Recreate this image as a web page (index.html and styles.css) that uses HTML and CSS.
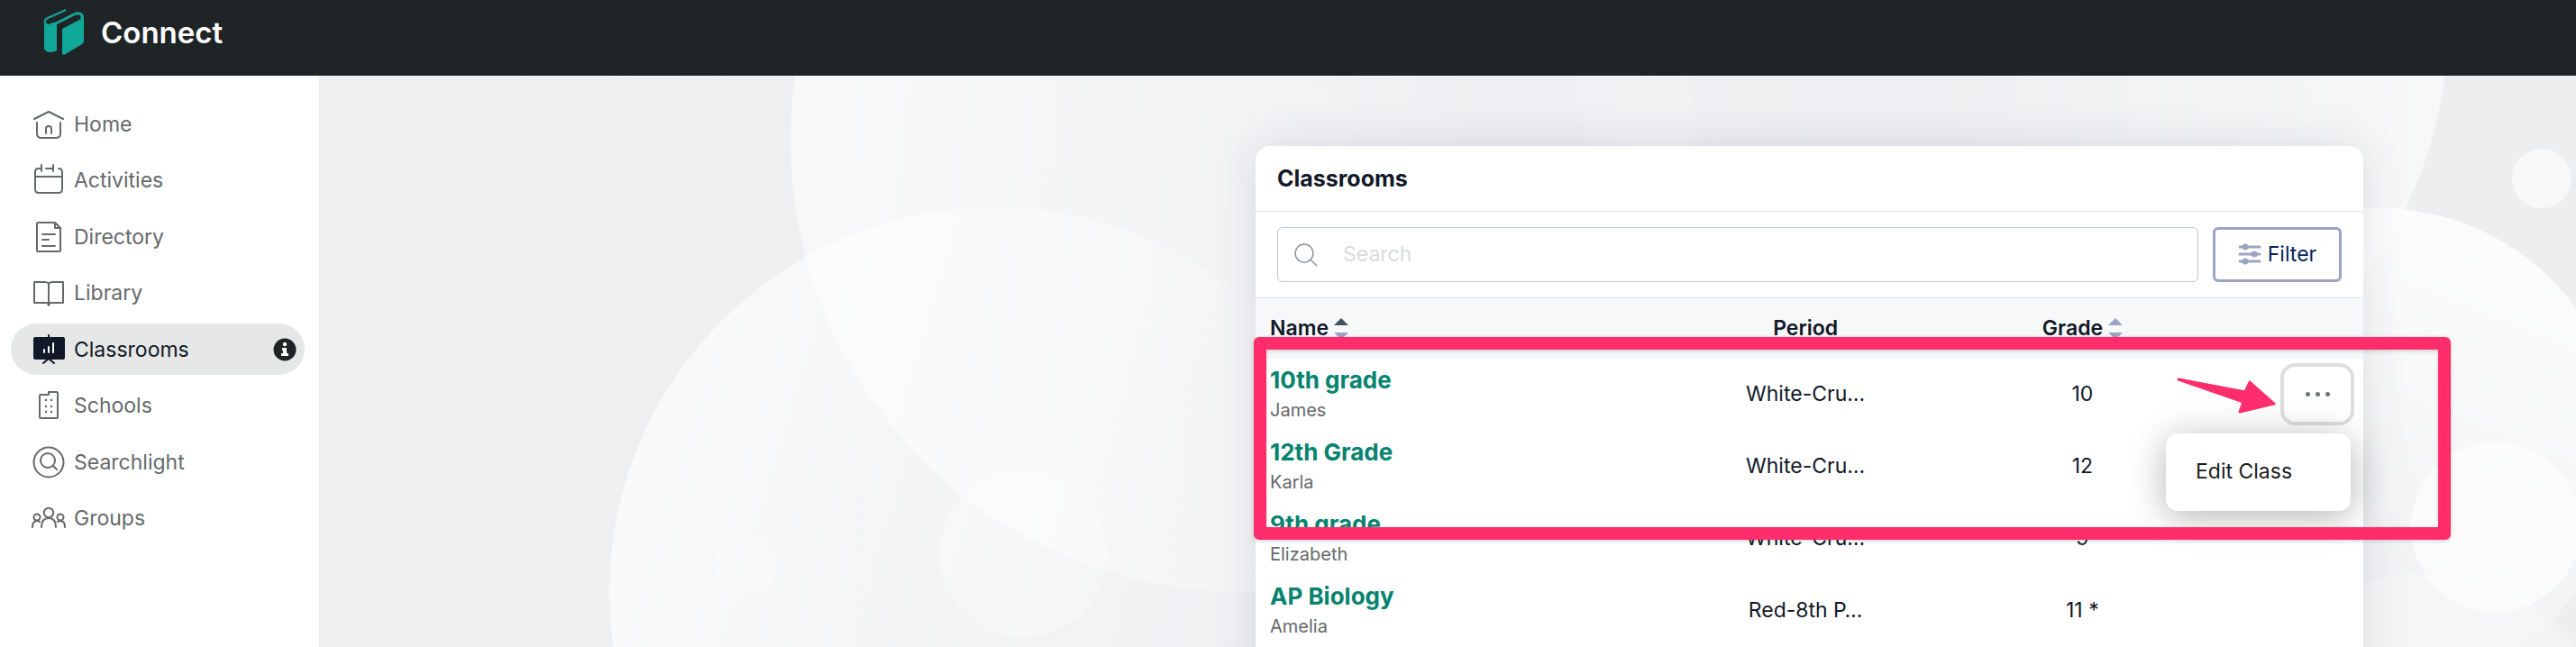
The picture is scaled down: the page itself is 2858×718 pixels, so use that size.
FILE: index.html
```
<!DOCTYPE html>
<html lang="en">
<head>
  <meta charset="UTF-8" />
  <meta name="viewport" content="width=device-width, initial-scale=1.0" />
  <title>Connect - Classrooms</title>
  <link rel="stylesheet" href="styles.css">
</head>
<body>
  <header class="topbar">
    <svg class="logo" viewBox="0 0 46 52" fill="#10a898">
      <path d="M1 13 Q3 17 8 17 Q12 17 15 15 V46 Q11 48 8 48 Q3 48 1 44 Z" />
      <path d="M2 15 Q1 12 5 10 L25 1" fill="none" stroke="#10a898" stroke-width="2" />
      <path d="M21 22 L42 11 L45 8 V36 Q45 38 43 39 L23 51 Q21 51 21 49 Z" />
      <path d="M8 17 Q12 17 16 15 L34 6 Q40 3 43 7 Q44 9 42 11" fill="none" stroke="#10a898" stroke-width="3" />
    </svg>
    <span class="brand">Connect</span>
  </header>

  <div class="page">
    <nav class="sidebar">
      <ul class="nav-list">
        <li><a class="nav-item" href="#">
          <svg class="nav-icon" viewBox="0 0 38 36"><path d="M3 12 L19 4 L35 12 M6 16 V28 Q6 33 11 33 H27 Q32 33 32 28 V16 M16 28 V23 Q16 20 19 20 Q22 20 22 23 V28" /></svg>
          Home</a></li>
        <li><a class="nav-item" href="#">
          <svg class="nav-icon" viewBox="0 0 38 36"><path d="M8 5 Q4 5 4 9 V28 Q4 32 8 32 H30 Q34 32 34 28 V9 Q34 5 30 5 M4 14 H34 M11 1 V8 M16 5 H24 M24 1 V8 M8 5 H11" /></svg>
          Activities</a></li>
        <li><a class="nav-item" href="#">
          <svg class="nav-icon" viewBox="0 0 38 36"><path d="M6 3 Q6 2 7 2 H26 L32 8 V33 Q32 34 31 34 H7 Q6 34 6 33 Z M26 2 V8 H32 M12 15 H26 M12 21 H19 M12 28 H26" /></svg>
          Directory</a></li>
        <li><a class="nav-item" href="#">
          <svg class="nav-icon" viewBox="0 0 38 36"><path d="M19 8 Q18 6 15 6 H3 V29 H16 Q19 29 19 32 Q19 29 22 29 H35 V6 H23 Q20 6 19 8 V31" /></svg>
          Library</a></li>
        <li><a class="nav-item active" href="#">
          <svg class="nav-icon solid" viewBox="0 0 38 36"><rect x="3" y="5" width="33" height="23" rx="1" /><path d="M19 2 V5 M19 28 L13 33 M19 28 L25 33" /><path class="bars" d="M14 18 V21 M19 15 V21 M24 11 V21" /></svg>
          Classrooms
          <svg class="info" viewBox="0 0 26 26"><circle cx="13" cy="13" r="12.5" /><circle cx="13" cy="7" r="2.2" fill="#fff" /><path d="M10 11 H15 V17 H17 V20 H9 V17 H11 V14 H10 Z" fill="#fff" /></svg></a></li>
        <li><a class="nav-item" href="#">
          <svg class="nav-icon" viewBox="0 0 38 36"><path d="M9 7 Q9 6 10 6 H19 V3 H28 Q29 3 29 4 V31 Q29 32 28 32 H10 Q9 32 9 31 Z" /><path class="dots" d="M16 12 h.01 M22 12 h.01 M16 19 h.01 M22 19 h.01 M16 25 h.01 M22 25 h.01" /></svg>
          Schools</a></li>
        <li><a class="nav-item" href="#">
          <svg class="nav-icon" viewBox="0 0 38 36"><circle cx="19" cy="18" r="16.5" /><circle cx="18" cy="16" r="8" /><path d="M24 22 L28 26" /></svg>
          Searchlight</a></li>
        <li><a class="nav-item" href="#">
          <svg class="nav-icon" viewBox="0 0 38 36"><circle cx="19" cy="12" r="5.2" /><circle cx="6" cy="17" r="3.5" /><circle cx="32" cy="17" r="3.5" /><path d="M11 28 Q11 18 19 18 Q27 18 27 28 M1 28 Q1 21 6 21 Q8 21 9 22 M37 28 Q37 21 32 21 Q30 21 29 22" /></svg>
          Groups</a></li>
      </ul>
    </nav>

    <main class="content">
      <svg class="backdrop" viewBox="354 84 2504 634" preserveAspectRatio="xMinYMin slice">
        <defs>
          <linearGradient id="fade" x1="0" y1="0.4" x2="1" y2="0.5">
            <stop offset="0" stop-color="#fff" stop-opacity="0.6" />
            <stop offset="0.4" stop-color="#fff" stop-opacity="0.4" />
            <stop offset="0.8" stop-color="#fff" stop-opacity="0.05" />
            <stop offset="1" stop-color="#fff" stop-opacity="0.12" />
          </linearGradient>
          <linearGradient id="fadeLow" x1="0" y1="0" x2="1" y2="0.3">
            <stop offset="0" stop-color="#fff" stop-opacity="0.75" />
            <stop offset="0.6" stop-color="#fff" stop-opacity="0.3" />
            <stop offset="1" stop-color="#fff" stop-opacity="0.1" />
          </linearGradient>
          <linearGradient id="fadeLeft" x1="1" y1="0" x2="0" y2="0">
            <stop offset="0" stop-color="#fff" stop-opacity="0.6" />
            <stop offset="0.6" stop-color="#fff" stop-opacity="0.05" />
            <stop offset="1" stop-color="#fff" stop-opacity="0.15" />
          </linearGradient>
          <linearGradient id="fadeDown" x1="0.7" y1="0" x2="0.3" y2="1">
            <stop offset="0.1" stop-color="#fff" stop-opacity="0.8" />
            <stop offset="0.7" stop-color="#fff" stop-opacity="0.3" />
          </linearGradient>
        </defs>
        <circle cx="1378" cy="156" r="501" fill="url(#fade)" />
        <circle cx="1104" cy="658" r="428" fill="url(#fadeLow)" />
        <circle cx="1135" cy="615" r="93" fill="#fff" fill-opacity="0.3" />
        <circle cx="828" cy="627" r="34" fill="#fff" fill-opacity="0.15" />
        <circle cx="2229" cy="20" r="488" fill="url(#fadeLeft)" />
        <circle cx="2640" cy="500" r="269" fill="url(#fadeDown)" />
        <circle cx="2693" cy="846" r="210" fill="#fff" fill-opacity="0.3" />
        <circle cx="2769" cy="585" r="94" fill="#fff" fill-opacity="0.6" />
        <circle cx="2820" cy="198" r="33" fill="#fff" fill-opacity="0.6" />
      </svg>

      <section class="card">
        <h1 class="card-title">Classrooms</h1>

        <div class="toolbar">
          <label class="search">
            <svg class="search-icon" viewBox="0 0 26 26"><circle cx="11" cy="11" r="10" /><path d="M18 18 L25 25" /></svg>
            <input class="search-input" type="text" placeholder="Search" aria-label="Search">
          </label>
          <button class="filter-button" type="button">
            <svg class="filter-icon" viewBox="0 0 26 24"><path d="M2 4 H24 M2 12 H24 M2 20 H24" /><circle cx="8" cy="4" r="3.5" /><circle cx="18" cy="12" r="3.5" /><circle cx="8" cy="20" r="3.5" /></svg>
            Filter
          </button>
        </div>

        <table class="class-table">
          <thead>
            <tr>
              <th class="col-name">Name <svg class="sort" viewBox="0 0 16 24"><path class="sorted" d="M0 8 L8 0 L16 8 Z" /><path d="M0 16 H16 L8 24 Z" /></svg></th>
              <th class="col-period">Period</th>
              <th class="col-grade">Grade <svg class="sort" viewBox="0 0 16 24"><path d="M0 8 L8 0 L16 8 Z" /><path d="M0 16 H16 L8 24 Z" /></svg></th>
              <th class="col-actions"></th>
            </tr>
          </thead>
          <tbody>
            <tr>
              <td><a class="class-link" href="#">10th grade</a><span class="teacher">James</span></td>
              <td>White-Cru…</td>
              <td>10</td>
              <td class="actions">
                <button class="more-button" type="button" aria-label="More"><span></span><span></span><span></span></button>
                <div class="menu"><button class="menu-item" type="button">Edit Class</button></div>
              </td>
            </tr>
            <tr>
              <td><a class="class-link" href="#">12th Grade</a><span class="teacher">Karla</span></td>
              <td>White-Cru…</td>
              <td>12</td>
              <td></td>
            </tr>
            <tr>
              <td><a class="class-link" href="#">9th grade</a><span class="teacher">Elizabeth</span></td>
              <td>White-Cru…</td>
              <td>9</td>
              <td></td>
            </tr>
            <tr>
              <td><a class="class-link" href="#">AP Biology</a><span class="teacher">Amelia</span></td>
              <td>Red-8th P…</td>
              <td>11 *</td>
              <td></td>
            </tr>
          </tbody>
        </table>

        <!-- highlight box and pointer over the first rows -->
        <div class="highlight"></div>
        <svg class="arrow" viewBox="0 0 116 44"><path d="M5 6 L79 20 L84 9 L111 33 L73 42 L77 31 Z" /></svg>
      </section>
    </main>
  </div>
</body>
</html>
```
FILE: styles.css
```
* {
  box-sizing: border-box;
}
body {
  margin: 0;
  min-height: 100vh;
  display: flex;
  flex-direction: column;
  overflow: hidden;
  font-family: Inter, 'Liberation Sans', sans-serif;
  font-size: 23px;
  color: #111827;
}
.topbar {
  display: flex;
  align-items: flex-start;
  gap: 18px;
  height: 84px;
  padding: 10px 48px;
  background-color: #1f2527;
}
.logo {
  width: 46px;
  height: 52px;
}
.brand {
  color: #fff;
  font-size: 33px;
  font-weight: 600;
  line-height: 52px;
}
.page {
  flex: 1;
  display: flex;
}
.sidebar {
  flex: none;
  width: 354px;
  padding: 25px 16px 0 12px;
  background-color: #fff;
}
.nav-list {
  display: flex;
  flex-direction: column;
  justify-content: space-between;
  height: 495px;
  margin: 0;
  padding: 0;
  list-style: none;
}
.nav-item {
  display: flex;
  align-items: center;
  gap: 9px;
  height: 57px;
  padding: 0 9px 0 23px;
  border-radius: 29px;
  color: #65696b;
  text-decoration: none;
}
.nav-item.active {
  background-color: #e6e8e7;
  color: #111827;
}
.nav-icon {
  width: 38px;
  height: 36px;
  fill: none;
  stroke: #65696b;
  stroke-width: 2;
  stroke-linecap: round;
  stroke-linejoin: round;
  overflow: visible;
}
.nav-icon .dots {
  stroke-width: 2.5;
}
.nav-icon.solid {
  fill: #111827;
  stroke: #111827;
}
.nav-icon .bars {
  stroke: #fff;
}
.info {
  width: 26px;
  height: 26px;
  margin-left: auto;
  fill: #1f2527;
}
.content {
  position: relative;
  flex: 1;
  height: 634px;
  padding: 78px 236px 0 1039px;
  background: linear-gradient(100deg, #eff0f2, #eeeff1 20%, #edeef1 50%, #edeef0);
  overflow: hidden;
}
.backdrop {
  position: absolute;
  inset: 0;
  width: 100%;
  height: 100%;
}
.card {
  position: relative;
  min-height: 640px;
  background-color: #fff;
  border-radius: 16px;
  box-shadow: 0 0 50px rgba(30, 35, 70, 0.12);
}
.card-title {
  margin: 0;
  padding: 0 24px;
  border-bottom: 1px solid #dfe5e5;
  font-size: 25px;
  font-weight: 700;
  line-height: 72px;
}
.toolbar {
  display: flex;
  gap: 16px;
  padding: 17px 24px;
  border-bottom: 1px solid #dfe5e5;
}
.search {
  flex: 1;
  display: flex;
  align-items: center;
  gap: 28px;
  height: 61px;
  padding: 0 18px;
  border: 1px solid #c0c6da;
  border-radius: 6px;
}
.search-icon {
  width: 26px;
  height: 26px;
  fill: none;
  stroke: #8a979f;
  stroke-width: 1.5;
}
.search-input {
  flex: 1;
  border: none;
  outline: none;
  padding: 0 0 2px;
  font: inherit;
  background: none;
}
.search-input::placeholder {
  color: #d9dcdc;
}
.filter-button {
  display: flex;
  align-items: center;
  justify-content: center;
  gap: 7px;
  width: 143px;
  height: 61px;
  padding: 0 0 1px;
  border: 3px solid #9ba5c3;
  border-radius: 6px;
  background-color: #fff;
  color: #061f5c;
  font: inherit;
}
.filter-icon {
  width: 26px;
  height: 24px;
  fill: #9ba5c3;
  stroke: #9ba5c3;
  stroke-width: 3;
  stroke-linecap: round;
}
.filter-icon circle {
  stroke: none;
}
.class-table {
  width: 100%;
  table-layout: fixed;
  border-collapse: collapse;
  text-align: center;
}
.class-table th {
  height: 67px;
  padding: 0 0 2px;
  background-color: #f7f8fa;
  font-weight: 600;
}
.class-table td {
  height: 80px;
  padding: 0 0 2px;
}
.class-table th:first-child,
.class-table td:first-child {
  padding-left: 16px;
  text-align: left;
}
.col-period,
.col-grade {
  width: 25%;
}
.col-actions {
  width: 158px;
}
.sort {
  width: 16px;
  height: 24px;
  vertical-align: middle;
  fill: #9ba5c3;
}
.sort .sorted {
  fill: #43525c;
}
.class-link {
  display: block;
  color: #05836f;
  font-size: 26px;
  font-weight: 700;
  line-height: 36px;
  text-decoration: none;
}
.teacher {
  display: block;
  color: #65696b;
  font-size: 20px;
  line-height: 30px;
}
.actions {
  position: relative;
}
.more-button {
  display: flex;
  align-items: center;
  justify-content: center;
  gap: 6px;
  width: 82px;
  height: 69px;
  margin-left: auto;
  margin-right: 10px;
  padding: 0;
  border: 4px solid #dedede;
  border-radius: 16px;
  background-color: #fff;
}
.more-button span {
  width: 5px;
  height: 5px;
  border-radius: 50%;
  background-color: #707374;
}
.menu {
  position: absolute;
  top: 83px;
  right: 14px;
  width: 205px;
  padding: 22px 33px 24px;
  border-radius: 13px;
  background-color: #fff;
  box-shadow: 0 6px 40px rgba(0, 0, 0, 0.3);
  text-align: left;
}
.menu-item {
  padding: 0;
  border: none;
  background: none;
  color: #1c1c1c;
  font: inherit;
  line-height: 40px;
  white-space: nowrap;
}
.highlight {
  position: absolute;
  top: 212px;
  left: -2px;
  right: -97px;
  height: 225px;
  border: 14px solid #ff2d6b;
  border-radius: 6px;
  box-shadow: 0 1px 4px rgba(0, 0, 0, 0.2), inset 0 2px 4px rgba(0, 0, 0, 0.15);
  pointer-events: none;
}
.arrow {
  position: absolute;
  top: 253px;
  right: 94px;
  width: 116px;
  height: 44px;
  fill: #ff2d6b;
  stroke: #ff2d6b;
  stroke-width: 3;
  stroke-linejoin: round;
  overflow: visible;
}
```
